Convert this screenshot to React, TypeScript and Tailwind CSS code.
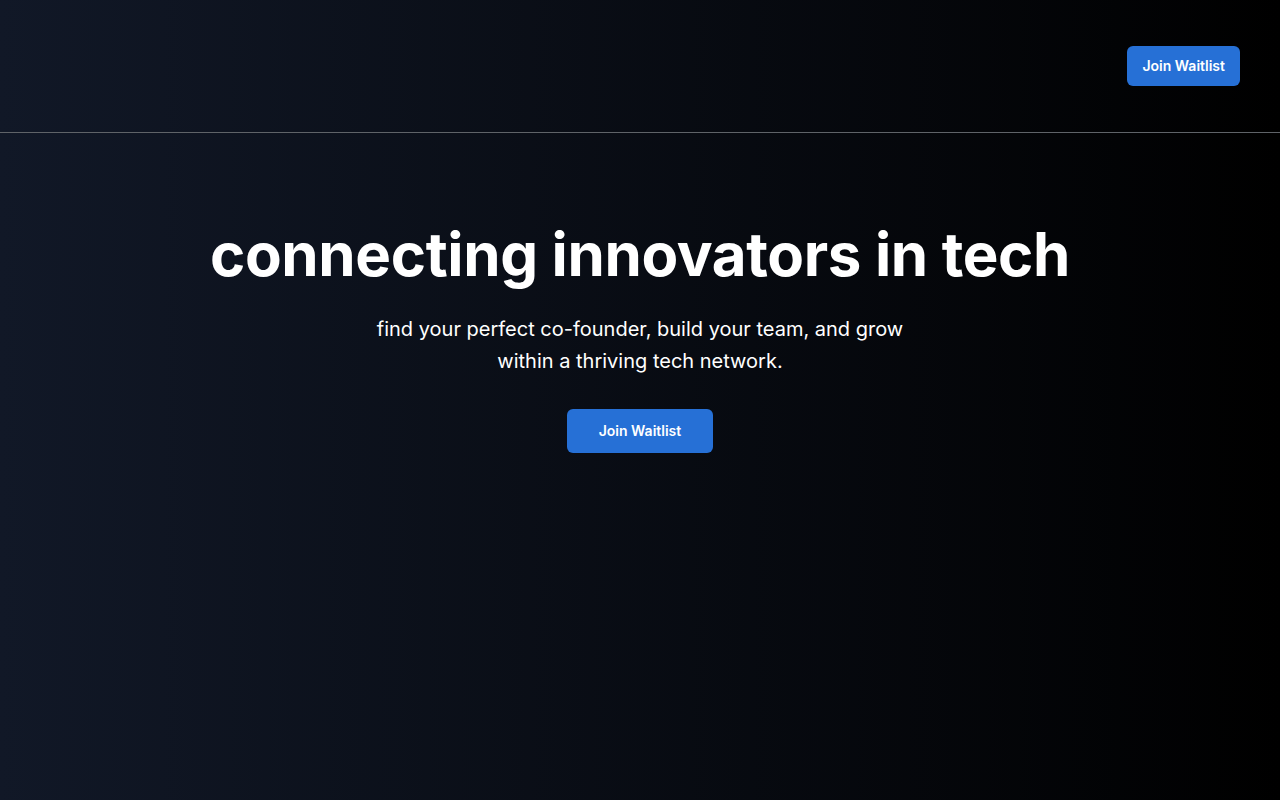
import React from 'react';

export default function App() {
    return (
        <div
            className="min-h-screen w-full bg-[linear-gradient(to_right,#111827,#000000)] text-white"
            style={{ fontFamily: 'Inter, "Noto Sans", sans-serif' }}
        >
            {/* Header */}
            <header className="h-[133px] border-b border-[#5f6368] flex items-center justify-end px-10">
                <button className="bg-[#2670d6] hover:bg-[#1f5fb8] text-white text-sm font-semibold px-[15px] py-2.5 rounded-md">
                    Join Waitlist
                </button>
            </header>

            {/* Hero */}
            <main className="flex flex-col items-center text-center pt-[91px] px-6">
                <h1 className="text-6xl font-bold tracking-[-0.006em] leading-none">
                    connecting innovators in tech
                </h1>
                <p className="mt-[29px] max-w-xl text-xl leading-8 text-white">
                    find your perfect co-founder, build your team, and grow within a thriving tech network.
                </p>
                <button className="mt-8 bg-[#2670d6] hover:bg-[#1f5fb8] text-white text-sm font-semibold px-8 py-3 rounded-md">
                    Join Waitlist
                </button>
            </main>
        </div>
    );
}
